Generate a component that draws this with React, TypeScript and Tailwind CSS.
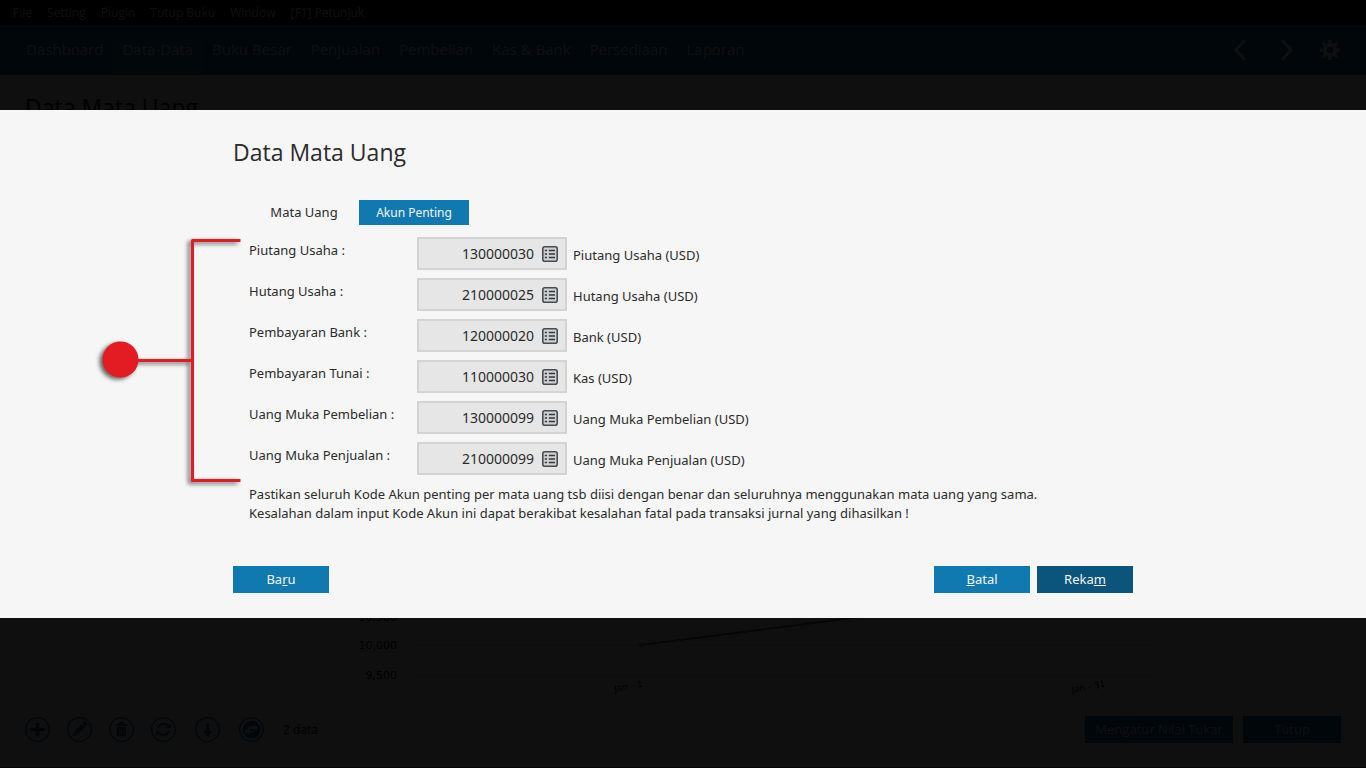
import { useState } from "react";

const menus = ["File", "Setting", "Plugin", "Tutup Buku", "Window", "[F1] Petunjuk"];

const modules = [
  "Dashboard",
  "Data-Data",
  "Buku Besar",
  "Penjualan",
  "Pembelian",
  "Kas & Bank",
  "Persediaan",
  "Laporan",
];

const accounts = [
  { id: "piutang", label: "Piutang Usaha :", code: "130000030", name: "Piutang Usaha (USD)" },
  { id: "hutang", label: "Hutang Usaha :", code: "210000025", name: "Hutang Usaha (USD)" },
  { id: "bank", label: "Pembayaran Bank :", code: "120000020", name: "Bank (USD)" },
  { id: "tunai", label: "Pembayaran Tunai :", code: "110000030", name: "Kas (USD)" },
  { id: "pembelian", label: "Uang Muka Pembelian :", code: "130000099", name: "Uang Muka Pembelian (USD)" },
  { id: "penjualan", label: "Uang Muka Penjualan :", code: "210000099", name: "Uang Muka Penjualan (USD)" },
];

const editTools = [
  {
    title: "Tambah",
    icon: <path d="M10.3 5.5h3.4v4.800h4.800v3.400h-4.800v4.800h-3.400v-4.800H5.500v-3.400h4.800z" fill="currentColor" />,
  },
  {
    title: "Ubah",
    icon: (
      <path
        d="M5.500 18.500l1-4 7.800-7.800 3 3-7.800 7.800zM15.200 5.800l1-1c.5-.5 1.200-.5 1.700 0l1.300 1.300c.5.5.5 1.200 0 1.700l-1 1z"
        fill="currentColor"
      />
    ),
  },
  {
    title: "Hapus",
    icon: (
      <>
        <path d="M6 8.500c.5-1.500 2-2 3.500-2 .3-1.300 1.200-2 2.500-2s2.200.7 2.500 2c1.500 0 3 .5 3.500 2z" fill="currentColor" />
        <path d="M7.500 9.500h9l-.5 9H8z" fill="currentColor" />
        <path d="M10.200 11v6M12 11v6M13.800 11v6" stroke="#f6f6f6" strokeWidth="0.7" />
      </>
    ),
  },
  {
    title: "Muat ulang",
    icon: (
      <>
        <path d="M6.800 10.500a5.500 5.500 0 0 1 9.600-1.800M17.200 13.500a5.500 5.500 0 0 1-9.600 1.800" fill="none" stroke="currentColor" strokeWidth="2" />
        <path d="M14.200 10.800h4.800V6zM9.800 13.200H5V18z" fill="currentColor" />
      </>
    ),
  },
];

const transferTools = [
  {
    title: "Unduh",
    icon: <path d="M10.800 6h2.600v7.500h3.600L12.100 19l-4.900-5.500h3.600z" fill="currentColor" />,
  },
  {
    title: "Tukar",
    icon: (
      <>
        <circle cx="12" cy="12" r="8.500" fill="currentColor" />
        <path d="M9 9.200h5V7l4.500 3.600-4.500 3.200v-2.300H9zM15 14.800h-5V17l-4.500-3.300L10 10.400v2.300h1z" fill="#f6f6f6" />
      </>
    ),
  },
];

function ToolButton({ title, icon }: { title: string; icon: React.ReactNode }) {
  return (
    <button aria-label={title}>
      <svg viewBox="0 0 24 24" className="size-[25px]">
        <circle cx="12" cy="12" r="11.300" fill="none" stroke="currentColor" strokeWidth="1.200" />
        {icon}
      </svg>
    </button>
  );
}

function ListIcon() {
  return (
    <svg viewBox="0 0 16 16" className="size-4">
      <rect x="0.800" y="0.800" width="14.400" height="14.400" rx="2" fill="#cfd1d2" stroke="#464c4f" strokeWidth="1.600" />
      <path d="M2.800 4.500H5M2.800 8H5M2.800 11.500H5" stroke="#33393c" strokeWidth="1.500" />
      <path d="M6.800 4.500H13M6.800 8H13M6.800 11.500H13" stroke="#33393c" strokeWidth="1.500" />
    </svg>
  );
}

function GearIcon() {
  return (
    <svg viewBox="0 0 20 20" className="size-5">
      <circle cx="10" cy="10" r="5.200" fill="none" stroke="currentColor" strokeWidth="4" />
      <path
        d="M10 0v4M10 16v4M0 10h4M16 10h4M2.900 2.900l2.900 2.900M14.200 14.200l2.900 2.900M2.900 17.100l2.900-2.900M14.200 5.800l2.900-2.900"
        stroke="currentColor"
        strokeWidth="3.200"
      />
    </svg>
  );
}

function RateChart() {
  return (
    <svg viewBox="0 0 1366 100" className="block w-full font-['DejaVu_Sans',sans-serif]" fontSize="11" fill="#000">
      <path d="M413 45.500H1156M413 75.500H1156" stroke="#d8d8d8" />
      <path d="M641 45L1103 -14" stroke="#1079af" strokeWidth="2" />
      <circle cx="641" cy="45" r="2" fill="#d2601a" />
      <g textAnchor="end">
        <text x="397" y="21">10,500</text>
        <text x="397" y="49">10,000</text>
        <text x="397" y="79">9,500</text>
      </g>
      <g fontSize="9">
        <text transform="translate(615 92) rotate(-11)">Jan - 1</text>
        <text transform="translate(1072 93) rotate(-11)">Jan - 31</text>
      </g>
    </svg>
  );
}

function Callout() {
  return (
    <svg
      width="156"
      height="260"
      viewBox="0 0 156 260"
      className="pointer-events-none absolute -top-2 -left-40 [filter:drop-shadow(-3px_2px_2px_rgb(0_0_0/0.6))]"
    >
      <path d="M151.500 11.500H103.500v240h48M103.500 131.500H48" fill="none" stroke="#e31b23" strokeWidth="3" strokeLinejoin="round" />
      <circle cx="31.500" cy="130.500" r="18" fill="#e31b23" />
    </svg>
  );
}

function Page() {
  return (
    <div className="flex min-h-screen flex-col border-b border-[#7a4050] bg-[#f6f6f6] font-['Open_Sans','Noto_Sans',sans-serif]">
      <div className="flex h-[25px] items-center gap-[15px] bg-black px-[13px] text-[12px] text-[#f6f6f6]">
        {menus.map((m) => (
          <button key={m}>{m}</button>
        ))}
      </div>
      <header className="flex h-[50px] items-center justify-between bg-[#1062a0] px-[17px] text-[#f6f6f6]">
        <nav className="flex gap-px self-end text-[15px]">
          {modules.map((m) => (
            <a
              key={m}
              href="#"
              className={`flex h-9 px-[9px] leading-5 ${m === "Data-Data" ? "bg-[#2b7aa8]" : ""}`}
            >
              {m}
            </a>
          ))}
        </nav>
        <div className="flex items-center gap-[35px] pr-[9px]">
          <button aria-label="Sebelumnya">
            <svg viewBox="0 0 12 22" className="h-[22px] w-3">
              <path d="M11 1L2 11l9 10" fill="none" stroke="currentColor" strokeWidth="3" />
            </svg>
          </button>
          <button aria-label="Berikutnya">
            <svg viewBox="0 0 12 22" className="h-[22px] w-3">
              <path d="M1 1l9 10-9 10" fill="none" stroke="currentColor" strokeWidth="3" />
            </svg>
          </button>
          <button aria-label="Pengaturan" className="-ml-2">
            <GearIcon />
          </button>
        </div>
      </header>
      <main className="flex grow flex-col justify-between">
        <h1 className="px-[25px] pt-4 text-[23px] leading-8 text-black">Data Mata Uang</h1>
        <RateChart />
      </main>
      <footer className="flex items-center justify-between px-[25px] pt-4 pb-6">
        <div className="flex items-center gap-[19px] text-[#1062a0]">
          <div className="flex gap-[17px]">
            {editTools.map((t) => (
              <ToolButton key={t.title} {...t} />
            ))}
          </div>
          {transferTools.map((t) => (
            <ToolButton key={t.title} {...t} />
          ))}
          <span className="text-[12px] text-black">2 data</span>
        </div>
        <div className="flex gap-[10px] text-[13px] text-[#f6f6f6]">
          <button className="h-[27px] w-[148px] bg-[#1062a0]">Mengatur Nilai Tukar</button>
          <button className="h-[27px] w-[98px] bg-[#1062a0]">Tutup</button>
        </div>
      </footer>
    </div>
  );
}

function CurrencyDialog() {
  const [tab, setTab] = useState("Akun Penting");

  return (
    <div
      role="dialog"
      aria-labelledby="dialog-title"
      className="w-full bg-[#f6f6f6] font-['Noto_Sans','Open_Sans',sans-serif] text-[#2b2b2b]"
    >
      <form className="mx-auto w-full max-w-[900px] pt-[26px] pb-[25px] text-[13px]" onSubmit={(e) => e.preventDefault()}>
        <h2 id="dialog-title" className="font-['Open_Sans',sans-serif] text-[23px] leading-8">
          Data Mata Uang
        </h2>

        <div className="mt-8 flex pl-4" role="tablist">
          {["Mata Uang", "Akun Penting"].map((t) => (
            <button
              key={t}
              type="button"
              role="tab"
              aria-selected={tab === t}
              onClick={() => setTab(t)}
              className={`h-[25px] w-[110px] ${tab === t ? "bg-[#1079af] text-[12px] text-[#f6f6f6]" : ""}`}
            >
              {t}
            </button>
          ))}
        </div>

        <div className="relative mt-3 ml-4 flex flex-col gap-2">
          <Callout />
          {accounts.map((a) => (
            <div key={a.id} className="flex h-[33px]">
              <label htmlFor={a.id} className="w-[168px] leading-[26px]">
                {a.label}
              </label>
              <div className="flex w-[150px] items-center border-2 border-[#d3d3d3] bg-[#e6e6e6] pr-[7px]">
                <input
                  id={a.id}
                  defaultValue={a.code}
                  className="w-full min-w-0 grow bg-transparent pr-2 text-right text-[14px] outline-none"
                />
                <button type="button" aria-label={`Pilih ${a.name}`} className="shrink-0">
                  <ListIcon />
                </button>
              </div>
              <span className="pl-[6px] leading-9">{a.name}</span>
            </div>
          ))}
        </div>

        <p className="mt-[10px] ml-4 leading-[19px]">
          Pastikan seluruh Kode Akun penting per mata uang tsb diisi dengan benar dan seluruhnya menggunakan mata uang
          yang sama.
          <br />
          Kesalahan dalam input Kode Akun ini dapat berakibat kesalahan fatal pada transaksi jurnal yang dihasilkan !
        </p>

        <div className="mt-[43px] flex gap-[7px] text-[#f6f6f6]">
          <button type="button" className="mr-auto h-[27px] w-24 bg-[#1079af]">
            Ba<u>r</u>u
          </button>
          <button type="button" className="h-[27px] w-24 bg-[#1079af]">
            <u>B</u>atal
          </button>
          <button type="submit" className="h-[27px] w-24 bg-[#0b557d]">
            Reka<u>m</u>
          </button>
        </div>
      </form>
    </div>
  );
}

export default function App() {
  return (
    <div>
      <Page />
      <div className="fixed inset-0 flex items-start bg-black/94 pt-[110px]">
        <CurrencyDialog />
      </div>
    </div>
  );
}
